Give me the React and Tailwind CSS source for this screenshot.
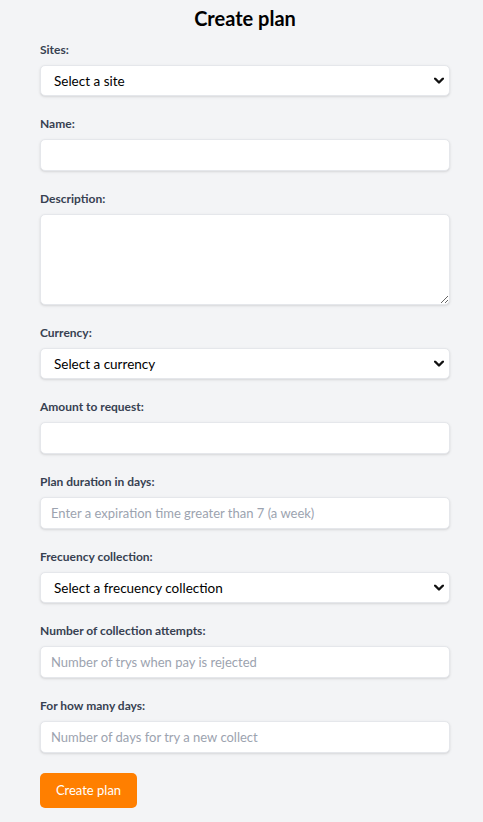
import { useState } from 'react'

const font = { fontFamily: "Lato, 'Liberation Sans', sans-serif" }

const Label = ({ children }) => (
  <label className="block text-xs leading-4 font-bold text-[#374151] mb-[7px]">{children}</label>
)

const Chevron = () => (
  <svg className="pointer-events-none absolute right-[6px] top-1/2 -translate-y-1/2" width="10" height="7" viewBox="0 0 10 7">
    <polyline points="1,1 5,5 9,1" fill="none" stroke="#111" strokeWidth="2.4" strokeLinecap="round" strokeLinejoin="round" />
  </svg>
)

const Select = ({ value, onChange, placeholder, options = [] }) => (
  <div className="relative">
    <select
      value={value}
      onChange={e => onChange(e.target.value)}
      className="block w-full h-[31px] appearance-none rounded-[5px] border border-[#e5e7eb] bg-white pl-[13px] pr-8 pt-px text-[13.5px] text-black shadow-sm outline-none"
    >
      <option value="">{placeholder}</option>
      {options.map(o => <option key={o} value={o}>{o}</option>)}
    </select>
    <Chevron />
  </div>
)

const Input = ({ placeholder, type = 'text' }) => (
  <input
    type={type}
    placeholder={placeholder}
    className="block w-full h-[32px] rounded-[5px] border border-[#e5e7eb] bg-white px-[10px] text-[13px] text-black placeholder:text-[#9ca3af] shadow-sm outline-none"
  />
)

export default function App() {
  const [site, setSite] = useState('')
  const [currency, setCurrency] = useState('')
  const [frequency, setFrequency] = useState('')

  return (
    <div className="min-h-screen bg-[#f3f4f6] pt-1" style={font}>
      <div className="ml-10 w-[410px]">
        <h1 className="text-xl leading-7 font-bold text-black text-center mb-[10px]">Create plan</h1>

        <div className="mb-5">
          <Label>Sites:</Label>
          <Select value={site} onChange={setSite} placeholder="Select a site" options={['Main site']} />
        </div>

        <div className="mb-5">
          <Label>Name:</Label>
          <Input />
        </div>

        <div className="mb-5">
          <Label>Description:</Label>
          <textarea className="block w-full h-[91px] rounded-[5px] border border-[#e5e7eb] bg-white px-[10px] py-1 text-[13px] shadow-sm outline-none" />
        </div>

        <div className="mb-5">
          <Label>Currency:</Label>
          <Select value={currency} onChange={setCurrency} placeholder="Select a currency" options={['USD', 'EUR']} />
        </div>

        <div className="mb-5">
          <Label>Amount to request:</Label>
          <Input type="number" />
        </div>

        <div className="mb-5">
          <Label>Plan duration in days:</Label>
          <Input type="number" placeholder="Enter a expiration time greater than 7 (a week)" />
        </div>

        <div className="mb-5">
          <Label>Frecuency collection:</Label>
          <Select value={frequency} onChange={setFrequency} placeholder="Select a frecuency collection" options={['Weekly', 'Monthly']} />
        </div>

        <div className="mb-5">
          <Label>Number of collection attempts:</Label>
          <Input type="number" placeholder="Number of trys when pay is rejected" />
        </div>

        <div className="mb-5">
          <Label>For how many days:</Label>
          <Input type="number" placeholder="Number of days for try a new collect" />
        </div>

        <button className="h-[35px] w-[97px] rounded-[5px] bg-[#ff7f00] pt-px text-[13px] text-white">Create plan</button>
      </div>
    </div>
  )
}
